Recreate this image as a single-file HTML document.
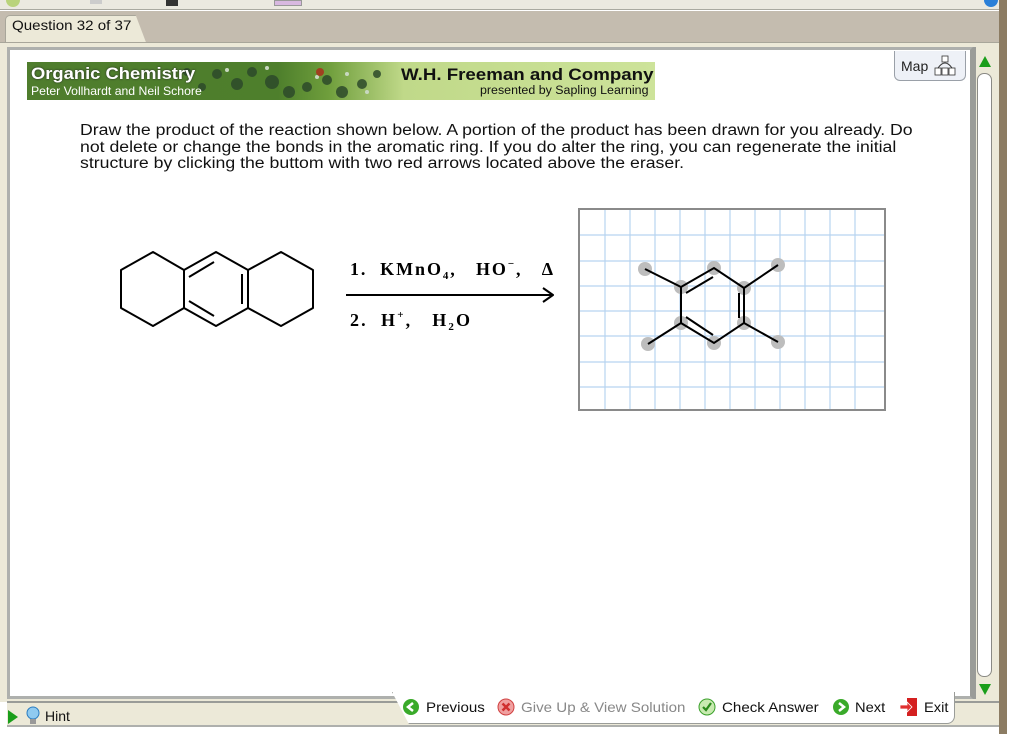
<!DOCTYPE html>
<html><head><meta charset="utf-8"><style>
*{margin:0;padding:0;box-sizing:border-box}
body{width:1024px;height:734px;overflow:hidden;background:#fff;font-family:"Liberation Sans",Arial,sans-serif;position:relative}
.a{position:absolute}
.s{transform-origin:0 0;white-space:nowrap}
</style></head><body>
<div class="a" style="left:0;top:0;width:1000px;height:10px;background:#ebe9e0;border-bottom:1px solid #a9a9a0"></div>
<div class="a" style="left:6px;top:0;width:14px;height:7px;background:#b9d37a;border-radius:0 0 7px 7px"></div>
<div class="a" style="left:90px;top:0;width:12px;height:4px;background:#ccc"></div>
<div class="a" style="left:166px;top:0;width:12px;height:6px;background:#333"></div>
<div class="a" style="left:274px;top:0;width:28px;height:6px;background:#d8b8e0;border:1px solid #999"></div>
<div class="a" style="left:984px;top:0;width:14px;height:7px;background:#2a7fd8;border-radius:0 0 7px 7px"></div>
<div class="a" style="left:0;top:11px;width:1000px;height:32px;background:#c4bcaf"></div>
<div class="a" style="left:5px;top:15px;width:142px;height:30px;background:#ece9d8;border:1px solid #a8a69a;border-bottom:none;border-radius:5px 0 0 0;clip-path:polygon(0 0,92% 0,100% 100%,0 100%)"></div>
<div class="a s" style="left:12px;top:17px;font-size:14px;color:#111;transform:scaleX(1.08)">Question 32 of 37</div>
<div class="a" style="left:0;top:42px;width:1000px;height:660px;background:#ece9d8;border-top:1px solid #a8a69a"></div>
<div class="a" style="left:7px;top:47px;width:966px;height:652px;background:#fff;border:3px solid #aeb0ad;border-right-color:#9a9c98"></div>
<div class="a" style="left:973px;top:47px;width:26px;height:652px;background:#ece9d8;border-left:3px solid #9a9c98"></div>
<div class="a" style="left:979px;top:56px;width:0;height:0;border-left:6px solid transparent;border-right:6px solid transparent;border-bottom:11px solid #1a9e1a"></div>
<div class="a" style="left:977px;top:73px;width:15px;height:604px;background:#fff;border:1px solid #8a8a85;border-radius:7px"></div>
<div class="a" style="left:979px;top:684px;width:0;height:0;border-left:6px solid transparent;border-right:6px solid transparent;border-top:11px solid #1a9e1a"></div>
<div class="a" style="left:999px;top:0;width:8px;height:734px;background:#8c7c63"></div>
<div class="a" style="left:7px;top:701px;width:992px;height:26px;background:#ece9d8;border-top:2px solid #9a9c98;border-bottom:2px solid #aeb0ad"></div>
<div class="a" style="left:8px;top:710px;width:0;height:0;border-top:7px solid transparent;border-bottom:7px solid transparent;border-left:10px solid #1a9e1a"></div>
<svg class="a" style="left:26px;top:706px" width="14" height="20"><circle cx="7" cy="7" r="6" fill="#8fcaf0" stroke="#2a7cc0"/><rect x="4" y="13" width="6" height="5" fill="#999"/></svg>
<div class="a" style="left:45px;top:708px;font-size:14px;color:#111">Hint</div>
<div class="a" style="left:392px;top:692px;width:563px;height:32px;background:#fff;border:1px solid #9a9c98;border-top:none;border-radius:0 0 8px 8px;clip-path:polygon(0 0,100% 0,100% 100%,3% 100%)"></div>
<svg class="a" style="left:402px;top:698px" width="18" height="18"><circle cx="9" cy="9" r="8" fill="#3aaa2a"/><path d="M11 5L6 9L11 13" stroke="#fff" stroke-width="2.5" fill="none"/></svg>
<div class="a s" style="left:426px;top:699px;font-size:14px;color:#111;transform:scaleX(1.08)">Previous</div>
<svg class="a" style="left:497px;top:698px" width="18" height="18"><circle cx="9" cy="9" r="8" fill="#f0a0a0" stroke="#d04040"/><path d="M5.5 5.5L12.5 12.5M12.5 5.5L5.5 12.5" stroke="#d03030" stroke-width="2.5"/></svg>
<div class="a s" style="left:521px;top:699px;font-size:14px;color:#888;transform:scaleX(1.08)">Give Up &amp; View Solution</div>
<svg class="a" style="left:698px;top:698px" width="18" height="18"><circle cx="9" cy="9" r="8" fill="#c8eab0" stroke="#3aa02a"/><path d="M5 9L8 12L13 5" stroke="#2a8a1a" stroke-width="2.2" fill="none"/></svg>
<div class="a s" style="left:722px;top:699px;font-size:14px;color:#111;transform:scaleX(1.08)">Check Answer</div>
<svg class="a" style="left:832px;top:698px" width="18" height="18"><circle cx="9" cy="9" r="8" fill="#3aaa2a"/><path d="M7 5L12 9L7 13" stroke="#fff" stroke-width="2.5" fill="none"/></svg>
<div class="a s" style="left:855px;top:699px;font-size:14px;color:#111;transform:scaleX(1.05)">Next</div>
<svg class="a" style="left:899px;top:697px" width="20" height="20"><rect x="8" y="1" width="10" height="18" fill="#d42020"/><path d="M1 8H8V5L13 10L8 15V12H1Z" fill="#e03030" stroke="#fff" stroke-width=".8"/></svg>
<div class="a s" style="left:924px;top:699px;font-size:14px;color:#111;transform:scaleX(1.05)">Exit</div>
<div class="a" style="left:894px;top:51px;width:72px;height:30px;background:#eef1f7;border:1px solid #9aa0a8;border-top:none;border-radius:0 0 6px 6px"></div>
<div class="a" style="left:901px;top:58px;font-size:14px;color:#222">Map</div>
<svg class="a" style="left:932px;top:55px" width="28" height="22"><g fill="#fff" stroke="#333" stroke-width=".8"><rect x="10" y="1" width="6" height="6"/><rect x="3" y="13" width="6" height="7"/><rect x="10" y="13" width="6" height="7"/><rect x="17" y="13" width="6" height="7"/></g><path d="M6 13Q13 3 20 13" stroke="#333" fill="none"/></svg>
<div class="a" style="left:27px;top:62px;width:628px;height:38px;background:linear-gradient(90deg,#4f7d2d 0%,#4e7f2c 40%,#6f9e3c 48%,#c0d989 60%,#cde39a 100%)"></div>
<svg class="a" style="left:27px;top:62px" width="628" height="38"><g fill="#2d4a2a" opacity=".85"><circle cx="190" cy="12" r="5"/><circle cx="210" cy="22" r="6"/><circle cx="225" cy="10" r="5"/><circle cx="245" cy="20" r="7"/><circle cx="262" cy="30" r="6"/><circle cx="280" cy="25" r="5"/><circle cx="300" cy="18" r="5"/><circle cx="315" cy="30" r="6"/><circle cx="335" cy="22" r="5"/><circle cx="350" cy="12" r="4"/><circle cx="160" cy="10" r="4"/><circle cx="175" cy="25" r="4"/></g><g fill="#c8d8c0"><circle cx="200" cy="8" r="2"/><circle cx="240" cy="6" r="2"/><circle cx="290" cy="15" r="2"/><circle cx="320" cy="12" r="2"/><circle cx="340" cy="30" r="2"/></g><circle cx="293" cy="10" r="4" fill="#a04020"/></svg>
<div class="a s" style="left:31px;top:64px;font-size:17px;font-weight:bold;color:#fff;text-shadow:0 0 2px #222;transform:scaleX(1.08)">Organic Chemistry</div>
<div class="a s" style="left:31px;top:84px;font-size:12px;color:#fff;transform:scaleX(1.02)">Peter Vollhardt and Neil Schore</div>
<div class="a s" style="left:401px;top:65px;font-size:17px;font-weight:bold;color:#111;transform:scaleX(1.1)">W.H. Freeman and Company</div>
<div class="a s" style="left:480px;top:85px;font-size:11.5px;color:#111;transform:scaleX(1.08)">presented by Sapling Learning</div>
<div class="a s" style="left:80px;top:123px;font-size:15.5px;line-height:16.5px;color:#111;transform:scaleX(1.14)">Draw the product of the reaction shown below. A portion of the product has been drawn for you already. Do<br>not delete or change the bonds in the aromatic ring. If you do alter the ring, you can regenerate the initial<br>structure by clicking the buttom with two red arrows located above the eraser.</div>
<svg class="a" style="left:0;top:0" width="580" height="360"><g stroke="#000" stroke-width="2" fill="none" stroke-linejoin="round">
<path d="M184 270L153 252L121 270L121 308L153 326L184 308Z"/>
<path d="M184 270L216 252L248 270L248 308L216 326L184 308"/>
<path d="M248 270L281 252L313 270L313 308L281 326L248 308"/>
<path d="M189 277L214 262M189 301L214 316M242 274L242 304"/>
<path d="M346 295H553M543 288L553 295L543 302" />
</g>
<g font-family="Liberation Serif,serif" font-weight="bold" font-size="18" fill="#000">
<text x="350" y="275" textLength="203" lengthAdjust="spacing">1.&#160; KMnO<tspan font-size="11" dy="4">4</tspan><tspan dy="-4">,&#160;&#160; HO</tspan><tspan font-size="11" dy="-8">−</tspan><tspan dy="8">,&#160;&#160; Δ</tspan></text>
<text x="350" y="326" textLength="120" lengthAdjust="spacing">2.&#160; H<tspan font-size="11" dy="-8">+</tspan><tspan dy="8">,&#160;&#160; H</tspan><tspan font-size="11" dy="4">2</tspan><tspan dy="-4">O</tspan></text>
</g></svg>
<svg class="a" style="left:578px;top:208px" width="308" height="203">
<rect x="1" y="1" width="306" height="201" fill="#fff" stroke="#8a8a8a" stroke-width="2"/>
<g stroke="#b8d4f0" stroke-width="1.2">
<path d="M27 2V201M52 2V201M77 2V201M102 2V201M127 2V201M152 2V201M177 2V201M202 2V201M227 2V201M252 2V201M277 2V201"/>
<path d="M2 27H306M2 53H306M2 78H306M2 103H306M2 128H306M2 154H306M2 179H306"/>
</g>
<g fill="#bdbdbd"><circle cx="67" cy="61" r="7"/><circle cx="136" cy="60" r="7"/><circle cx="200" cy="57" r="7"/><circle cx="103" cy="79" r="7"/><circle cx="166" cy="80" r="7"/><circle cx="103" cy="115" r="7"/><circle cx="166" cy="115" r="7"/><circle cx="70" cy="136" r="7"/><circle cx="136" cy="135" r="7"/><circle cx="200" cy="134" r="7"/></g>
<g stroke="#000" stroke-width="2" fill="none">
<path d="M67 61L103 79L136 60L166 80L200 57M103 79V115L136 135L166 115V80M103 115L70 136M166 115L200 134"/>
<path d="M108 85L135 69M108 109L135 127M161 85V110"/>
</g></svg>
</body></html>
